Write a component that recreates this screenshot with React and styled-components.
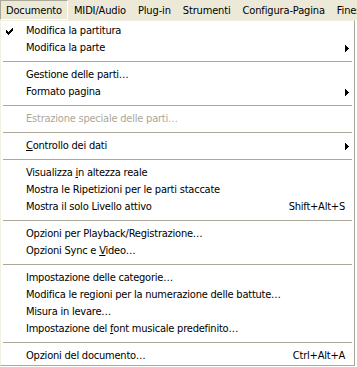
import React from 'react';
import styled, { createGlobalStyle, css } from 'styled-components';

const Global = createGlobalStyle`
  html, body { margin: 0; padding: 0; background: #fff; }
  body {
    font-family: "DejaVu Sans Condensed", "DejaVu Sans", sans-serif;
    font-stretch: condensed;
    font-size: 11px;
    color: #000;
    -webkit-font-smoothing: none;
  }
`;

const Screen = styled.div`
  width: 357px;
  height: 367px;
  overflow: hidden;
  display: flex;
  flex-direction: column;
  background: #fff;
`;

const MenuBar = styled.div`
  display: flex;
  flex-shrink: 0;
  height: 20px;
  background: #ece9d8;
  white-space: nowrap;
  letter-spacing: -0.15px;
`;

const BarItem = styled.div`
  box-sizing: border-box;
  height: 20px;
  display: flex;
  align-items: center;
  padding: 0 5px;
  border: 1px solid transparent;
  ${(p) =>
    p.$open &&
    css`
      border-color: #aca899 #ffffff #ffffff #aca899;
    `}
`;

const Menu = styled.div`
  box-sizing: border-box;
  width: 355px;
  border: 1px solid;
  border-color: #f1efe2 #aca899 #aca899 #f1efe2;
  padding: 1px;
  background: #fff;
  display: flex;
  flex-direction: column;
  letter-spacing: -0.22px;
`;

const MenuItem = styled.div`
  display: grid;
  grid-template-columns: 24px 1fr auto 8px;
  align-items: center;
  height: 17px;
  white-space: nowrap;
  color: ${(p) => (p.$disabled ? '#aca899' : '#000')};
`;

const CheckCell = styled.div`
  display: flex;
  align-items: center;
  padding-left: 4px;
  margin-top: 1px;
`;

const Label = styled.span`
  overflow: hidden;
`;

const Shortcut = styled.span`
  text-align: right;
  padding-left: 16px;
`;

const ArrowCell = styled.div`
  display: flex;
  align-items: center;
  margin-top: 1px;
`;

const Mnemonic = styled.span`
  text-decoration: underline;
  text-underline-offset: 1px;
`;

const Separator = styled.div`
  height: 1px;
  margin: 5px 1px 4px;
  background: #aca899;
`;

const Check = () => (
  <svg width="7" height="7" viewBox="0 0 7 7" shapeRendering="crispEdges">
    <path
      fill="#000"
      d="M6 0h1v1H6zM5 1h2v1H5zM0 2h1v1H0zM4 2h3v1H4zM0 3h2v1H0zM3 3h3v1H3zM0 4h5v1H0zM1 5h3v1H1zM2 6h1v1H2z"
    />
  </svg>
);

const Arrow = () => (
  <svg width="4" height="7" viewBox="0 0 4 7" shapeRendering="crispEdges">
    <path fill="#000" d="M0 0h1v7H0zM1 1h1v5H1zM2 2h1v3H2zM3 3h1v1H3z" />
  </svg>
);

const barItems = ['Documento', 'MIDI/Audio', 'Plug-in', 'Strumenti', 'Configura-Pagina', 'Finestra'];

const items = [
  { label: 'Modifica la partitura', checked: true },
  { label: 'Modifica la parte', sub: true },
  'sep',
  { label: 'Gestione delle parti…' },
  { label: 'Formato pagina', sub: true },
  'sep',
  { label: 'Estrazione speciale delle parti…', disabled: true },
  'sep',
  { label: ['', 'C', 'ontrollo dei dati'], sub: true },
  'sep',
  { label: ['Visualizza ', 'i', 'n altezza reale'] },
  { label: 'Mostra le Ripetizioni per le parti staccate' },
  { label: 'Mostra il solo Livello attivo', shortcut: 'Shift+Alt+S' },
  'sep',
  { label: 'Opzioni per Playback/Registrazione…' },
  { label: ['Opzioni Sync e ', 'V', 'ideo…'] },
  'sep',
  { label: 'Impostazione delle categorie…' },
  { label: 'Modifica le regioni per la numerazione delle battute…' },
  { label: 'Misura in levare…' },
  { label: ['Impostazione del ', 'f', 'ont musicale predefinito…'] },
  'sep',
  { label: 'Opzioni del documento…', shortcut: 'Ctrl+Alt+A' },
];

const renderLabel = (label) =>
  Array.isArray(label) ? (
    <>
      {label[0]}
      <Mnemonic>{label[1]}</Mnemonic>
      {label[2]}
    </>
  ) : (
    label
  );

export default function App() {
  return (
    <>
      <Global />
      <Screen>
        <MenuBar>
          {barItems.map((b, i) => (
            <BarItem key={b} $open={i === 0}>
              {b}
            </BarItem>
          ))}
        </MenuBar>
        <Menu>
          {items.map((it, i) =>
            it === 'sep' ? (
              <Separator key={i} />
            ) : (
              <MenuItem key={i} $disabled={it.disabled}>
                <CheckCell>{it.checked && <Check />}</CheckCell>
                <Label>{renderLabel(it.label)}</Label>
                <Shortcut>{it.shortcut || ''}</Shortcut>
                <ArrowCell>{it.sub && <Arrow />}</ArrowCell>
              </MenuItem>
            )
          )}
        </Menu>
      </Screen>
    </>
  );
}
